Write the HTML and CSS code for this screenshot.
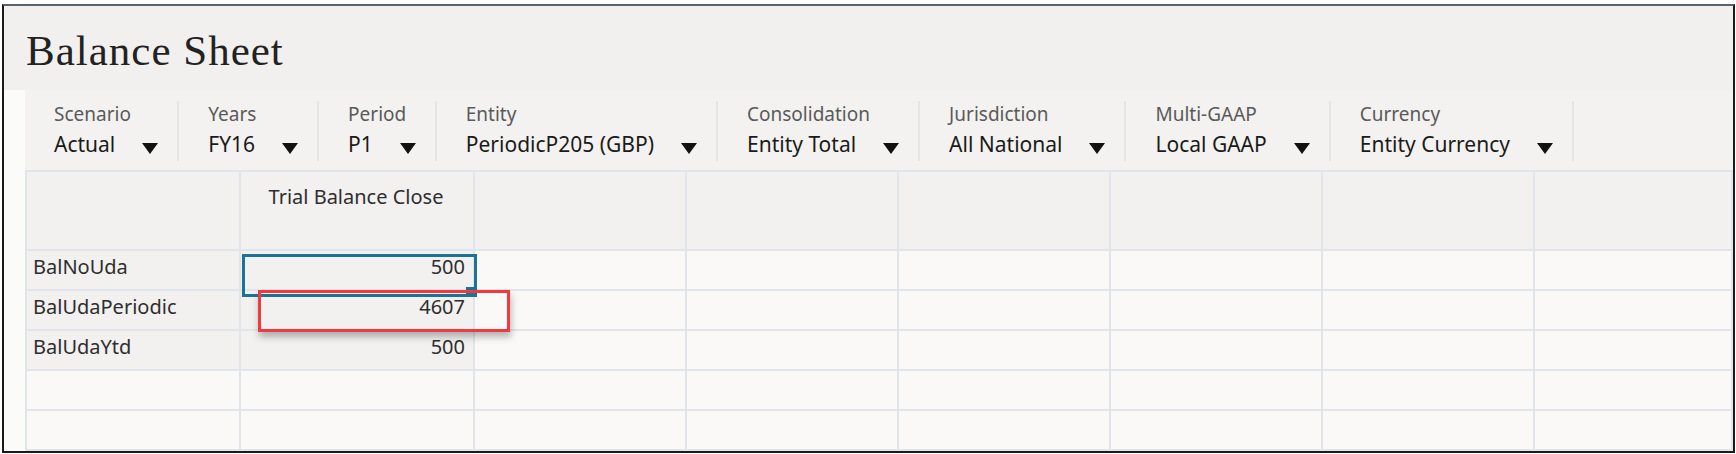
FILE: index.html
```html
<!DOCTYPE html>
<html lang="en">
<head>
    <meta charset="UTF-8">
    <title>Balance Sheet</title>
    <link rel="stylesheet" href="styles.css">
</head>
<body>
    <div class="frame">
        <div class="title-bar">
            <h1>Balance Sheet</h1>
        </div>
        <div class="main">
            <div class="strip"></div>
            <div class="content">
                <div class="toolbar">
                    <div class="pov">
                        <div class="pov-label">Scenario</div>
                        <div class="pov-value">Actual<span class="arrow"></span></div>
                    </div>
                    <div class="pov">
                        <div class="pov-label">Years</div>
                        <div class="pov-value">FY16<span class="arrow"></span></div>
                    </div>
                    <div class="pov">
                        <div class="pov-label">Period</div>
                        <div class="pov-value">P1<span class="arrow"></span></div>
                    </div>
                    <div class="pov">
                        <div class="pov-label">Entity</div>
                        <div class="pov-value">PeriodicP205 (GBP)<span class="arrow"></span></div>
                    </div>
                    <div class="pov">
                        <div class="pov-label">Consolidation</div>
                        <div class="pov-value">Entity Total<span class="arrow"></span></div>
                    </div>
                    <div class="pov">
                        <div class="pov-label">Jurisdiction</div>
                        <div class="pov-value">All National<span class="arrow"></span></div>
                    </div>
                    <div class="pov">
                        <div class="pov-label">Multi-GAAP</div>
                        <div class="pov-value">Local GAAP<span class="arrow"></span></div>
                    </div>
                    <div class="pov">
                        <div class="pov-label">Currency</div>
                        <div class="pov-value">Entity Currency<span class="arrow"></span></div>
                    </div>
                </div>

                <div class="grid">
                    <!-- header row -->
                    <div class="cell head"></div>
                    <div class="cell head col-title">Trial Balance Close</div>
                    <div class="cell head"></div>
                    <div class="cell head"></div>
                    <div class="cell head"></div>
                    <div class="cell head"></div>
                    <div class="cell head"></div>
                    <div class="cell head"></div>

                    <div class="cell row-label">BalNoUda</div>
                    <div class="cell data">500</div>
                    <div class="cell"></div><div class="cell"></div><div class="cell"></div>
                    <div class="cell"></div><div class="cell"></div><div class="cell"></div>

                    <div class="cell row-label">BalUdaPeriodic</div>
                    <div class="cell data">4607</div>
                    <div class="cell"></div><div class="cell"></div><div class="cell"></div>
                    <div class="cell"></div><div class="cell"></div><div class="cell"></div>

                    <div class="cell row-label">BalUdaYtd</div>
                    <div class="cell data">500</div>
                    <div class="cell"></div><div class="cell"></div><div class="cell"></div>
                    <div class="cell"></div><div class="cell"></div><div class="cell"></div>

                    <div class="cell"></div><div class="cell"></div><div class="cell"></div><div class="cell"></div>
                    <div class="cell"></div><div class="cell"></div><div class="cell"></div><div class="cell"></div>

                    <div class="cell"></div><div class="cell"></div><div class="cell"></div><div class="cell"></div>
                    <div class="cell"></div><div class="cell"></div><div class="cell"></div><div class="cell"></div>

                    <!-- selected cell and callout -->
                    <div class="selection"><span class="handle"></span></div>
                    <div class="callout"></div>
                </div>
            </div>
        </div>
    </div>
</body>
</html>
```

FILE: styles.css
```css
body {
    margin: 0;
    background-color: #fff;
    font-family: "Noto Sans", "Open Sans", sans-serif;
    color: #222;
}
.frame {
    box-sizing: border-box;
    width: 1733px;
    height: 449px;
    margin: 4px 0 0 2px;
    border: 2px solid #1a1a1a;
    border-top-color: #59636c;
    overflow: hidden;
    display: flex;
    flex-direction: column;
}
.title-bar {
    box-sizing: border-box;
    height: 84px;
    padding: 23px 0 0 22px;
    background-color: #f1f0ee;
}
h1 {
    margin: 0;
    font-family: "Liberation Serif", serif;
    font-weight: normal;
    font-size: 43px;
    line-height: 43px;
    letter-spacing: 1px;
    color: #222;
}
.main {
    display: flex;
    flex: 1;
}
.strip {
    width: 21px;
    background-color: #fbfbfa;
}
.content {
    flex: 1;
    display: flex;
    flex-direction: column;
}
.toolbar {
    box-sizing: border-box;
    height: 80px;
    padding-top: 11px;
    display: flex;
    align-items: flex-start;
    background-color: #f3f2f0;
}
.pov {
    padding: 1px 19px 4px 29px;
    border-right: 2px solid #e6e5e3;
}
.pov-label {
    font-size: 19px;
    line-height: 24px;
    color: #5a5a5a;
}
.pov-value {
    display: flex;
    margin-top: 5px;
    font-size: 21px;
    line-height: 26px;
    color: #1a1a1a;
    white-space: nowrap;
}
.arrow {
    width: 0;
    height: 0;
    margin: 12px 0 0 27px;
    border-left: 8px solid transparent;
    border-right: 8px solid transparent;
    border-top: 11px solid #111;
}
.grid {
    position: relative;
    flex: 1;
    display: grid;
    grid-template-columns: 214px 234px repeat(5, 212px) 1fr;
    grid-template-rows: 79px repeat(5, 40px);
    border-top: 2px solid #e0e5eb;
    border-left: 2px solid #e0e5eb;
    overflow: hidden;
}
.cell {
    box-sizing: border-box;
    border-right: 2px solid #e0e5eb;
    border-bottom: 2px solid #e0e5eb;
    background-color: #faf9f8;
    font-size: 20px;
    line-height: 26px;
    padding: 3px 8px 0 6px;
    color: #2e2e2e;
}
.cell.head {
    background-color: #f2f1ef;
}
.col-title {
    text-align: center;
    padding-top: 12px;
}
.row-label {
    background-color: #f2f1ef;
}
.data {
    background-color: #f2f1ef;
    text-align: right;
}
.selection {
    position: absolute;
    left: 215px;
    top: 82px;
    box-sizing: border-box;
    width: 235px;
    height: 43px;
    border: 3px solid #1d7396;
}
.handle {
    position: absolute;
    right: 0;
    bottom: 0;
    width: 8px;
    height: 7px;
    background-color: #1d7396;
}
.callout {
    position: absolute;
    left: 231px;
    top: 118px;
    box-sizing: border-box;
    width: 252px;
    height: 42px;
    border: 3px solid #ef3b40;
    box-shadow: 1px 5px 7px rgba(0, 0, 0, 0.28);
}
```
